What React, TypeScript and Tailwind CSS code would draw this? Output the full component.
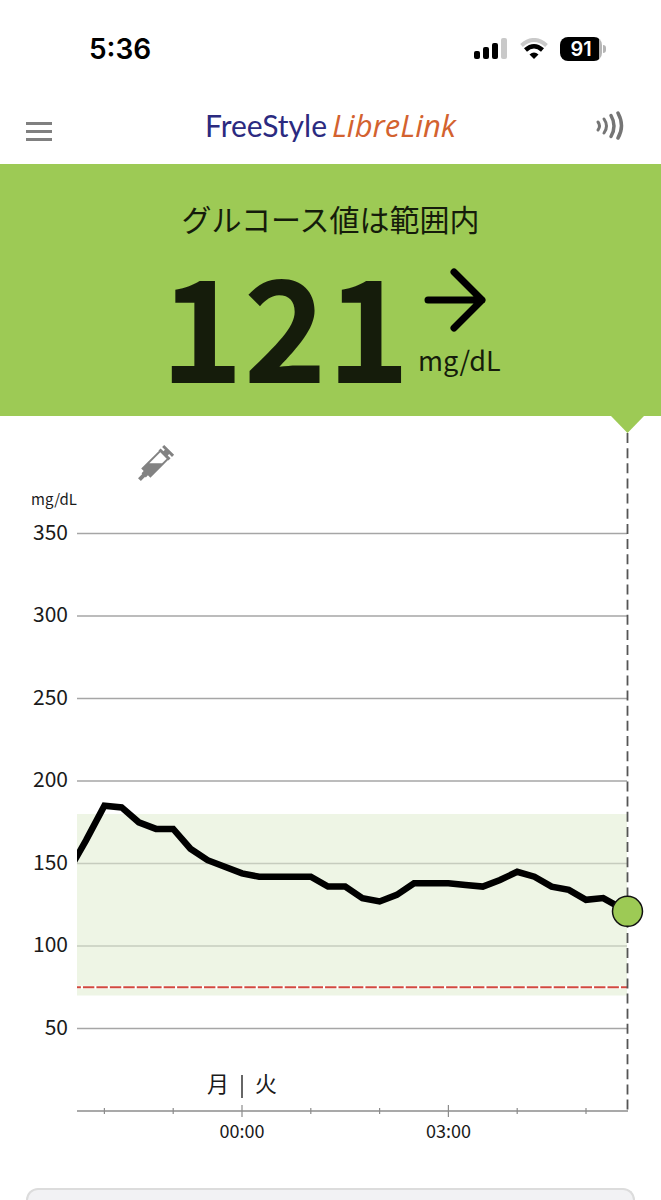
const CHART_LEFT = 77;
const NOW_X = 627;
const MIDNIGHT_X = 242;
const BASELINE = 695;

// hours are relative to midnight
const timeToX = (hour: number) => MIDNIGHT_X + hour * 68.8;
const valueToY = (value: number) => BASELINE - value * 1.65;

const levels = [350, 300, 250, 200, 150, 100, 50];

// one reading every 15 minutes, starting at 22:00
const readings = [
  185, 184, 175, 171, 171, 159, 152, 148, 144, 142, 142, 142, 142, 136, 136,
  129, 127, 131, 138, 138, 138, 137, 136, 140, 145, 142, 136, 134, 128, 129,
];

const points = [
  [72, valueToY(149)],
  [86, valueToY(164)],
  ...readings.map((value, i) => [timeToX(-2 + i / 4), valueToY(value)]),
  [NOW_X, valueToY(121)],
]
  .map(([x, y]) => `${x.toFixed(1)},${y.toFixed(1)}`)
  .join(" ");

const ticks = [-2, -1, 0, 1, 2, 3, 4, 5];

function StatusBar() {
  return (
    <div className="flex h-[98px] items-center justify-between pr-[55px] pl-[89px] font-['Inter',sans-serif]">
      <span className="text-[28px] leading-8 font-semibold text-black">5:36</span>
      <div className="flex items-center">
        {/* Signal */}
        <svg width="34" height="22" viewBox="0 0 34 22" aria-hidden="true">
          <rect x="0" y="13" width="6" height="8" rx="2" />
          <rect x="9" y="9" width="6" height="12" rx="2" />
          <rect x="18" y="5" width="6" height="16" rx="2" />
          <rect x="27" y="0" width="6" height="21" rx="2" fill="#c9c9c9" />
        </svg>
        {/* Wifi */}
        <svg className="ml-3" width="28" height="22" viewBox="0 0 28 22" aria-hidden="true">
          <path d="M1.5 7.5 Q14 -3.5 26.500 7.500" fill="none" stroke="#c9c9c9" strokeWidth="4" />
          <path d="M5.500 12 Q14 4.500 22.500 12" fill="none" stroke="#000" strokeWidth="4.500" />
          <path d="M14 21 L9.500 16.500 Q14 12.500 18.500 16.500 Z" />
        </svg>
        {/* Battery */}
        <div className="ml-3 flex h-6 w-[42px] items-center justify-center rounded-lg bg-linear-to-r from-black from-92% to-[#b5b5b5] to-92% text-xl leading-6 font-semibold text-white">
          91
        </div>
        <div className="ml-px h-2 w-[3px] rounded-r-sm bg-[#b5b5b5]" />
      </div>
    </div>
  );
}

function Header() {
  return (
    <header className="flex h-[66px] items-center justify-between px-[26px] pb-3">
      <button type="button" aria-label="Menu" className="flex w-[40px] flex-col gap-[5px] pt-3">
        <span className="h-[3px] w-[26px] bg-[#808080]" />
        <span className="h-[3px] w-[26px] bg-[#808080]" />
        <span className="h-[3px] w-[26px] bg-[#808080]" />
      </button>
      <h1 className="flex items-baseline gap-[5px] leading-10">
        <span className="font-['Lato',sans-serif] text-[30px] text-[#2b2a80]">FreeStyle</span>
        <span className="font-['Open_Sans',sans-serif] text-[31px] font-medium text-[#d3622f] italic">LibreLink</span>
      </h1>
      <button type="button" aria-label="Scan sensor" className="w-[40px]">
        <svg width="30" height="30" viewBox="0 0 30 30" fill="none" stroke="#757575" strokeWidth="3" strokeLinecap="round">
          <path d="M3 12 Q6 16 3 20" />
          <path d="M9 9 Q14 16 9 23" />
          <path d="M16 5.500 Q22 16 16 26.500" strokeWidth="3.500" />
          <path d="M23 3 Q30 16 23 28" strokeWidth="3.500" />
        </svg>
      </button>
    </header>
  );
}

function GlucoseBanner() {
  return (
    <section className="flex h-[252px] flex-col items-center bg-[#9dca55] pt-[30px] text-[#151c0b]">
      <h2 className="text-[30px] leading-12">グルコース値は範囲内</h2>
      <div className="mt-4 flex items-start gap-2">
        <p className="text-[141px] leading-[128px] font-bold">121</p>
        <div className="flex flex-col pt-[10px]">
          <svg className="ml-1 h-[64px] w-[64px]" viewBox="0 0 64 64" fill="none" stroke="#000" strokeWidth="7" strokeLinecap="round" strokeLinejoin="round" aria-label="Steady">
            <path d="M6 32 H60 M32 4 L60 32 L32 60" />
          </svg>
          <span className="mt-2 text-[27px] leading-10">mg/dL</span>
        </div>
      </div>
    </section>
  );
}

function GlucoseChart() {
  return (
    <svg className="block w-full" viewBox="0 0 661 772" role="img" aria-label="Glucose history">
      <defs>
        <clipPath id="plot">
          <rect x={CHART_LEFT} y="0" width="600" height="772" />
        </clipPath>
      </defs>

      {/* Insulin note */}
      <g transform="translate(155 48) rotate(45)" fill="#828282">
        <path d="M-7 -20 H7 V-17 H3 V-15 H7 V-12 H6.500 V13 H3 V16 H2 V22 H-2 V16 H-3 V13 H-6.500 V-12 H-7 V-15 H-3 V-17 H-7 Z" />
        <path d="M-4.500 -12 H4.500 V-5.500 L-4.500 3.500 Z" fill="#fff" />
      </g>

      {/* Target range */}
      <rect x={CHART_LEFT} y={valueToY(180)} width={NOW_X - CHART_LEFT} height={valueToY(70) - valueToY(180)} fill="#eef5e5" />

      {/* Scale */}
      <text x="31" y="89" fontSize="15" fill="#1a1a1a">mg/dL</text>
      {levels.map((level) => (
        <g key={level}>
          <line
            x1={CHART_LEFT}
            x2={NOW_X}
            y1={valueToY(level)}
            y2={valueToY(level)}
            stroke={level === 150 || level === 100 ? "#c6ccbe" : "#a6a6a6"}
            strokeWidth="1.300"
          />
          <text x="68" y={valueToY(level) + 6} fontSize="21" textAnchor="end" fill="#1a1a1a">
            {level}
          </text>
        </g>
      ))}

      {/* Low alarm */}
      <line x1={CHART_LEFT} x2={NOW_X} y1={valueToY(75)} y2={valueToY(75)} stroke="#fff" strokeWidth="3" />
      <line x1={CHART_LEFT} x2={NOW_X} y1={valueToY(75)} y2={valueToY(75)} stroke="#d1493f" strokeWidth="2" strokeDasharray="11.400 2.050" strokeDashoffset="7.500" />

      {/* Time axis */}
      <line x1={CHART_LEFT} x2={NOW_X + 1} y1={BASELINE} y2={BASELINE} stroke="#8c8c8c" strokeWidth="1.500" />
      {ticks.map((hour) => {
        const size = hour % 3 === 0 ? 6 : 3;
        return (
          <line key={hour} x1={timeToX(hour)} x2={timeToX(hour)} y1={BASELINE - size} y2={BASELINE + size} stroke="#8c8c8c" strokeWidth="1.200" />
        );
      })}
      <g fontSize="18" textAnchor="middle" fill="#1a1a1a">
        <text x={timeToX(0)} y="722">00:00</text>
        <text x={timeToX(3)} y="722">03:00</text>
      </g>
      <g fontSize="22" textAnchor="middle" fill="#1a1a1a">
        <text x={MIDNIGHT_X - 24} y="676">月</text>
        <text x={MIDNIGHT_X + 24} y="676">火</text>
      </g>
      <line x1={MIDNIGHT_X} x2={MIDNIGHT_X} y1="659" y2="682" stroke="#333" strokeWidth="1.500" />

      {/* Current time */}
      <line x1={NOW_X + 0.5} x2={NOW_X + 0.5} y1="17" y2={BASELINE} stroke="#555" strokeWidth="1.800" strokeDasharray="10 5.150" />
      <path d="M611 0 H644 L627.500 17 Z" fill="#9dca55" />

      {/* Readings */}
      <polyline points={points} clipPath="url(#plot)" fill="none" stroke="#000" strokeWidth="6.500" />
      <circle cx={NOW_X + 0.5} cy={valueToY(121)} r="15" fill="#9dca55" stroke="#111" strokeWidth="1.500" />
    </svg>
  );
}

export default function App() {
  return (
    <main className="flex min-h-screen flex-col bg-white font-['Noto_Sans_CJK_JP',sans-serif]">
      <StatusBar />
      <Header />
      <GlucoseBanner />
      <GlucoseChart />
      <section className="mx-[26px] min-h-3 flex-1 rounded-t-2xl border-2 border-b-0 border-[#dcdcdc] bg-[#f2f2f4]" />
    </main>
  );
}
